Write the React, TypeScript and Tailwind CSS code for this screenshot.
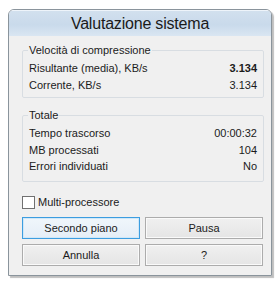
import React from "react";

function Row({ label, value, bold }: { label: string; value: string; bold?: boolean }) {
  return (
    <div className="flex items-center justify-between h-[17px]">
      <span>{label}</span>
      <span className={bold ? "font-bold" : ""}>{value}</span>
    </div>
  );
}

function Btn({ children, focused }: { children: React.ReactNode; focused?: boolean }) {
  return (
    <button
      className={
        "h-[22px] flex-1 flex items-center justify-center border " +
        (focused
          ? "border-[#3c9de0] bg-[linear-gradient(#f0f6fb,#e5eef7)] shadow-[inset_0_0_0_1px_#d0e8f8]"
          : "border-[#acacac] bg-[linear-gradient(#f0f0f0,#e5e5e5)] shadow-[inset_0_0_0_1px_#fafafa]")
      }
    >
      {children}
    </button>
  );
}

export default function App() {
  return (
    <div className="w-[278px] h-[285px] bg-white pt-[9px] pl-[8px]">
      <div
        className="w-[264px] h-[267px] flex flex-col rounded-t-[6px] border border-[#8a949c] shadow-[2px_2px_1px_rgba(0,0,0,0.25)] overflow-hidden text-[11px] text-[#1b1b1b]"
        style={{ fontFamily: '"Liberation Sans", Arial, sans-serif' }}
      >
        <div className="h-[26px] shrink-0 flex items-center justify-center bg-[linear-gradient(#d2e0ee,#c9daeb_55%,#dae6f2)] border-t border-[#eef4fa] text-[16px] tracking-[-0.2px] text-[#1a1a1a]">
          Valutazione sistema
        </div>
        <div className="flex-1 bg-[#f0f0f0] pl-[13px] pr-[7px] pt-[7px] flex flex-col">
          <fieldset className="border border-[#d8dde2] rounded-[2px] pl-[6px] pr-[6px] pb-[3px] h-[55px]">
            <legend className="px-[1px] -ml-[1px] leading-[14px]">Velocità di compressione</legend>
            <div className="pt-[3px]">
              <Row label="Risultante (media), KB/s" value="3.134" bold />
              <Row label="Corrente, KB/s" value="3.134" />
            </div>
          </fieldset>
          <fieldset className="mt-[10px] border border-[#d8dde2] rounded-[2px] pl-[6px] pr-[6px] h-[74px]">
            <legend className="px-[1px] -ml-[1px] leading-[14px]">Totale</legend>
            <div className="pt-[3px] flex flex-col">
              <div className="flex items-center justify-between h-[16.5px]">
                <span>Tempo trascorso</span>
                <span>00:00:32</span>
              </div>
              <div className="flex items-center justify-between h-[16.5px]">
                <span>MB processati</span>
                <span>104</span>
              </div>
              <div className="flex items-center justify-between h-[16.5px]">
                <span>Errori individuati</span>
                <span>No</span>
              </div>
            </div>
          </fieldset>
          <div className="mt-[13px] flex items-center h-[14px]">
            <div className="w-[13px] h-[13px] border border-[#707070] bg-white shrink-0" />
            <span className="ml-[3px]">Multi-processore</span>
          </div>
          <div className="mt-[8px] flex gap-[5px] pr-[1px]">
            <Btn focused>Secondo piano</Btn>
            <Btn>Pausa</Btn>
          </div>
          <div className="mt-[5px] flex gap-[5px] pr-[1px]">
            <Btn>Annulla</Btn>
            <Btn>?</Btn>
          </div>
        </div>
      </div>
    </div>
  );
}
